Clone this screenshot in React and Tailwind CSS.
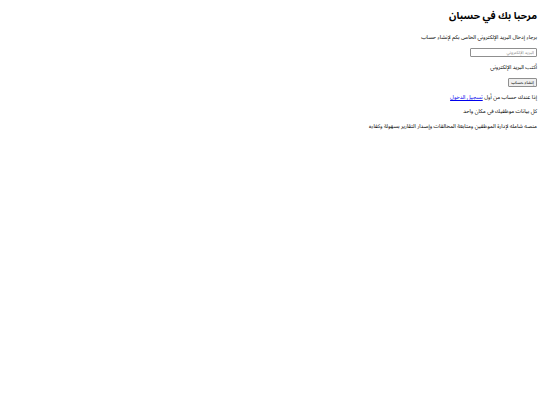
export default function App() {
  return (
    <div dir="rtl" className="w-[540px] h-[405px] bg-white pr-[3px] pt-[9px] text-black">
      <div className="font-['Noto_Sans_Arabic',serif] text-[5.5px] leading-[8px]">
        <h1 className="font-bold text-[10px] leading-[14px] mb-[10px]">مرحبا بك في حسبان</h1>
        <p className="mb-[7px]">برجاء إدخال البريد الإلكتروني الخاص بكم لإنشاء حساب</p>
        <div className="mb-[6px] h-[9px] flex">
          <input
            type="email"
            placeholder="البريد الإلكتروني"
            className="w-[67px] h-[9px] border border-[#8f8f8f] rounded-[1px] px-[2px] text-[4.5px] leading-[7px] placeholder:text-[#8a8a8a] outline-none"
          />
        </div>
        <p className="mb-[7px]">أكتب البريد الإلكتروني</p>
        <div className="mb-[6px] h-[9px] flex">
          <button className="h-[9px] w-[29px] border border-[#8f8f8f] bg-[#efefef] rounded-[1px] text-[4.5px] leading-[7px]">إنشاء حساب</button>
        </div>
        <p className="mb-[6px]">
          إذا عندك حساب من أول <a href="#" className="text-[#0000ee] underline">تسجيل الدخول</a>
        </p>
        <p className="mb-[7px]">كل بيانات موظفيك في مكان واحد</p>
        <p>منصه شامله لإدارة الموظفين ومتابعة المخالفات وإصدار التقارير بسهولة وكفاءه</p>
      </div>
    </div>
  );
}
